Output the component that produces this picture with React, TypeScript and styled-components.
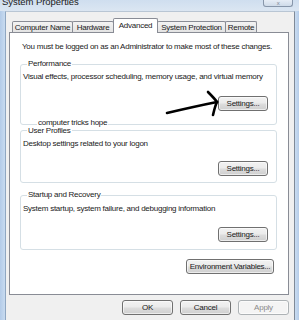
import React from 'react';
import styled, { createGlobalStyle } from 'styled-components';

const Global = createGlobalStyle`
  html, body { margin: 0; padding: 0; background: #fff; }
  body { font-family: "Liberation Sans", Arial, sans-serif; font-size: 8px; letter-spacing: -0.25px; color: #1a1a1a; }
  * { box-sizing: border-box; }
`;

const Window = styled.div`
  width: 299px; height: 320px; overflow: hidden;
  display: flex; flex-direction: column;
  background: #c4d7ed;
`;

const TitleBar = styled.div`
  height: 11px; flex-shrink: 0;
  display: flex; justify-content: space-between; align-items: flex-start;
  background: linear-gradient(#cfdeef, #dbe6f2);
`;

const Title = styled.div`
  font-size: 9.5px; line-height: 9px; margin-top: -3px; padding-left: 2px;
  letter-spacing: -0.05px; color: #202020;
`;

const CloseBtn = styled.div`
  width: 30px; height: 7px; margin-right: 6px;
  border: 1px solid #8796aa; border-top: none; border-radius: 0 0 3px 3px;
  background: linear-gradient(#e6edf6, #cfdbe9);
  display: flex; justify-content: center; align-items: flex-end;
  font-size: 6px; line-height: 5px; color: #7d8796;
`;

const Frame = styled.div`
  flex: 1; min-height: 0; display: flex;
`;

const Side = styled.div<{ $w: number; $right?: boolean }>`
  width: ${p => p.$w}px; flex-shrink: 0;
  background: ${p => p.$right
    ? 'linear-gradient(90deg, #c9dcf1, #b6cde9)'
    : 'linear-gradient(90deg, #b3cbe8, #c8dbf0)'};
`;

const Body = styled.div`
  flex: 1; min-width: 0;
  background: #f0f0f0;
  border-top: 1px solid #b9c6d4;
  border-left: 1px solid #8fa7c2;
  border-right: 1px solid #7f8a98;
  padding: 6px 5px 0 3px;
  display: flex; flex-direction: column;
`;

const TabRow = styled.div`
  height: 15px; display: flex; align-items: flex-end;
  padding-left: 3px; margin-bottom: -1px;
  position: relative; z-index: 1;
`;

const Tab = styled.div<{ $w: number; $active?: boolean }>`
  width: ${p => p.$w}px; flex-shrink: 0;
  height: ${p => (p.$active ? 15 : 11)}px;
  margin-bottom: ${p => (p.$active ? 0 : 1)}px;
  & + & { margin-left: -1px; }
  border: 1px solid #898c95; border-bottom: none;
  border-radius: 2px 2px 0 0;
  background: ${p => (p.$active ? '#fff' : 'linear-gradient(#f3f3f3, #e3e3e3)')};
  display: flex; justify-content: center; align-items: ${p => (p.$active ? 'flex-start' : 'center')};
  padding-top: ${p => (p.$active ? 2 : 0)}px;
  line-height: 9px; white-space: nowrap;
  position: relative; z-index: ${p => (p.$active ? 2 : 1)};
`;

const Panel = styled.div`
  height: 263px; flex-shrink: 0;
  background: #fff; border: 1px solid #898c95;
  padding: 9px 11px 0 10px;
  display: flex; flex-direction: column;
  position: relative;
`;

const Intro = styled.div`
  line-height: 10px; margin-left: 2px; white-space: nowrap;
`;

const Group = styled.fieldset<{ $mt: number; $pt: number; $gap: number; $pb: number }>`
  margin: ${p => p.$mt}px 0 0 0;
  padding: ${p => p.$pt}px 8px ${p => p.$pb}px 1px;
  border: 1px solid #d5dfe5; border-radius: 3px;
  display: flex; flex-direction: column; gap: ${p => p.$gap}px;
  position: relative; min-width: 0;
`;

const Legend = styled.legend<{ $lh?: number }>`
  margin-left: 5px; padding: 0 1px;
  line-height: ${p => p.$lh ?? 10}px; white-space: nowrap;
`;

const Line = styled.div`
  line-height: 10px; padding-left: 1px; white-space: nowrap;
`;

const Note = styled.span`
  position: absolute; left: 16px; bottom: -2px;
  background: #fff; padding: 0 1px;
  line-height: 7px; white-space: nowrap;
`;

const Button = styled.button<{ $w: number; $disabled?: boolean }>`
  width: ${p => p.$w}px; height: 15px; padding: 0;
  font: inherit; letter-spacing: inherit; line-height: 13px;
  color: ${p => (p.$disabled ? '#8b8b8b' : '#1a1a1a')};
  border: 1px solid ${p => (p.$disabled ? '#adb2b5' : '#707070')};
  border-radius: 3px;
  background: ${p => p.$disabled
    ? '#f4f4f4'
    : 'linear-gradient(#f2f2f2 0%, #ebebeb 48%, #dddddd 52%, #cfcfcf 100%)'};
  box-shadow: inset 0 0 0 1px rgba(255,255,255,0.6);
  align-self: flex-end; flex-shrink: 0;
`;

const EnvButton = styled(Button)`
  margin: 9px 3px 0 0;
`;

const Footer = styled.div`
  display: flex; justify-content: flex-end; gap: 7px;
  margin-top: 5px;
`;

const Arrow = styled.svg`
  position: absolute; left: 150px; top: 55px;
  width: 62px; height: 32px; overflow: visible;
`;

export default function App() {
  return (
    <Window>
      <Global />
      <TitleBar>
        <Title>System Properties</Title>
        <CloseBtn>x</CloseBtn>
      </TitleBar>
      <Frame>
        <Side $w={5} />
        <Body>
          <TabRow>
            <Tab $w={61}>Computer Name</Tab>
            <Tab $w={42}>Hardware</Tab>
            <Tab $w={45} $active>Advanced</Tab>
            <Tab $w={69}>System Protection</Tab>
            <Tab $w={32}>Remote</Tab>
          </TabRow>
          <Panel>
            <Intro>You must be logged on as an Administrator to make most of these changes.</Intro>

            <Group $mt={7} $pt={3} $gap={14} $pb={13}>
              <Legend>Performance</Legend>
              <Line>Visual effects, processor scheduling, memory usage, and virtual memory</Line>
              <Button $w={50}>Settings...</Button>
              <Note>computer tricks hope</Note>
            </Group>

            <Group $mt={2} $pt={5} $gap={12} $pb={6}>
              <Legend $lh={7}>User Profiles</Legend>
              <Line>Desktop settings related to your logon</Line>
              <Button $w={50}>Settings...</Button>
            </Group>

            <Group $mt={7} $pt={4} $gap={13} $pb={7}>
              <Legend>Startup and Recovery</Legend>
              <Line>System startup, system failure, and debugging information</Line>
              <Button $w={50}>Settings...</Button>
            </Group>

            <EnvButton $w={88}>Environment Variables...</EnvButton>

            <Arrow viewBox="0 0 62 32">
              <g fill="none" stroke="#000" strokeWidth={2.6} strokeLinecap="round" strokeLinejoin="round">
                <path d="M7 25 C 24 21, 42 17, 57 14" />
                <path d="M48 4 C 52 8, 55 11, 57 14" />
                <path d="M57 14 C 55 18, 54 23, 53 27" />
              </g>
            </Arrow>
          </Panel>
          <Footer>
            <Button $w={51}>OK</Button>
            <Button $w={51}>Cancel</Button>
            <Button $w={51} $disabled>Apply</Button>
          </Footer>
        </Body>
        <Side $w={4} $right />
      </Frame>
    </Window>
  );
}
